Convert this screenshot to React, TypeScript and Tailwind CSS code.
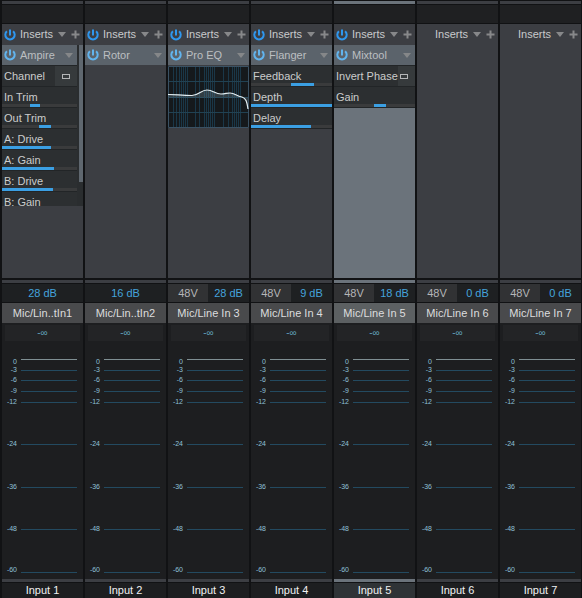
import React from "react";

type Param = {
  name: string;
  from?: number;
  to?: number;
  toggle?: boolean;
};

type Device = {
  name: string;
  params?: Param[];
  eq?: boolean;
  scroll?: boolean;
};

type Channel = {
  label: string;
  source: string;
  gain: string;
  phantom?: boolean;
  selected?: boolean;
  device?: Device;
};

const channels: Channel[] = [
  {
    label: "Input 1",
    source: "Mic/Lin..tIn1",
    gain: "28 dB",
    device: {
      name: "Ampire",
      scroll: true,
      params: [
        { name: "Channel", toggle: true },
        { name: "In Trim", from: 37, to: 51 },
        { name: "Out Trim", from: 49, to: 65 },
        { name: "A: Drive", from: 0, to: 65 },
        { name: "A: Gain", from: 0, to: 69 },
        { name: "B: Drive", from: 0, to: 68 },
        { name: "B: Gain", from: 0, to: 60 },
      ],
    },
  },
  { label: "Input 2", source: "Mic/Lin..tIn2", gain: "16 dB", device: { name: "Rotor" } },
  {
    label: "Input 3",
    source: "Mic/Line In 3",
    gain: "28 dB",
    phantom: true,
    device: { name: "Pro EQ", eq: true },
  },
  {
    label: "Input 4",
    source: "Mic/Line In 4",
    gain: "9 dB",
    phantom: true,
    device: {
      name: "Flanger",
      params: [
        { name: "Feedback", from: 49, to: 78 },
        { name: "Depth", from: 0, to: 100 },
        { name: "Delay", from: 0, to: 74 },
      ],
    },
  },
  {
    label: "Input 5",
    source: "Mic/Line In 5",
    gain: "18 dB",
    phantom: true,
    selected: true,
    device: {
      name: "Mixtool",
      params: [
        { name: "Invert Phase", toggle: true },
        { name: "Gain", from: 49, to: 64 },
      ],
    },
  },
  { label: "Input 6", source: "Mic/Line In 6", gain: "0 dB", phantom: true },
  { label: "Input 7", source: "Mic/Line In 7", gain: "0 dB", phantom: true },
];

const ticks = [
  { db: "0", row: "", label: "pt-1.5" },
  { db: "-3", row: "mt-px", label: "" },
  { db: "-6", row: "", label: "" },
  { db: "-9", row: "mt-px", label: "" },
  { db: "-12", row: "mt-px", label: "" },
  { db: "-24", row: "mt-8", label: "" },
  { db: "-36", row: "mt-[33px]", label: "" },
  { db: "-48", row: "mt-8", label: "" },
  { db: "-60", row: "mt-[33px]", label: "pb-1" },
];

function PowerIcon() {
  return (
    <svg viewBox="0 0 12 12" className="size-3" fill="none" stroke="currentColor" strokeWidth="2">
      <path d="M2.9 2.2A4.7 4.7 0 1 0 9.1 2.2" />
      <path d="M6 0.6V6.4" />
    </svg>
  );
}

function CaretIcon() {
  return (
    <svg viewBox="0 0 8 5" className="h-[5px] w-2" fill="currentColor">
      <path d="M0 0H8L4 5Z" />
    </svg>
  );
}

function PlusIcon() {
  return (
    <svg viewBox="0 0 9 9" className="size-[9px]" fill="currentColor">
      <path d="M3.5 0.5H5.5V3.5H8.5V5.5H5.5V8.5H3.5V5.5H0.5V3.5H3.5Z" />
    </svg>
  );
}

function EqCurve() {
  const grid = [5, 8, 11, 13, 15, 17, 19, 27, 31, 36, 38, 40, 42, 44, 46, 55, 60, 64, 66, 68, 70, 72];
  return (
    <svg
      viewBox="0 0 81 62"
      preserveAspectRatio="none"
      className="mt-px block h-[62px] w-full bg-[#15191c]"
      fill="none"
    >
      {grid.map((x) => (
        <path key={x} d={`M${x + 0.5} 0V62`} stroke="#1a3748" />
      ))}
      <path d="M0 15.5H81M0 31.5H81M0 46.5H81" stroke="#214253" />
      <path d="M0.5 0.5H80.5V61.5H0.5Z" stroke="#3a5163" />
      <path
        d="M0 28.5C8 28.5 14 29.5 24 29.5C31 29.5 33 24 39 24C45 24 47 28 53 28C58 28 58 27 62 27C67 27 68 30 74 31C78 32 79 36 80 43V31.5H0Z"
        fill="#7e9ba8"
        fillOpacity="0.28"
      />
      <path
        d="M0 28.5C8 28.5 14 29.5 24 29.5C31 29.5 33 24 39 24C45 24 47 28 53 28C58 28 58 27 62 27C67 27 68 30 74 31C78 32 79 36 80 43"
        stroke="#e3eef2"
        strokeWidth="1.2"
      />
    </svg>
  );
}

function ParamRow({ param, owner }: { param: Param; owner: string }) {
  if (param.toggle) {
    return (
      <label className="flex h-[21px] shrink-0 items-stretch border-b border-[#222527] bg-[#2c2f31]">
        <span className="shrink-0 grow pl-0.5 leading-5 whitespace-nowrap">{param.name}</span>
        <span className="flex w-[22px] min-w-0 items-center justify-end bg-[#363a3c] pr-[7px]">
          <input
            type="checkbox"
            className="h-[5px] w-2 shrink-0 appearance-none border border-[#b4b6b7] checked:bg-[#3b9fe3]"
          />
        </span>
      </label>
    );
  }
  const from = param.from ?? 0;
  const to = param.to ?? 0;
  return (
    <button
      type="button"
      aria-label={`${owner} ${param.name}`}
      className="flex h-[21px] shrink-0 flex-col border-b border-[#222527] bg-[#2c2f31] text-left"
    >
      <span className="h-[17px] pl-0.5 leading-5 whitespace-nowrap">{param.name}</span>
      <span className="flex h-[3px] w-full bg-[#3a3b3c]">
        <span
          className="h-full bg-[#3b9fe3]"
          style={{ marginLeft: `${from}%`, width: `${to - from}%` }}
        />
      </span>
    </button>
  );
}

function DeviceSlot({ device }: { device: Device }) {
  return (
    <div className={device.scroll ? "flex h-[161px] overflow-hidden" : "flex"}>
      <div className="flex min-w-0 grow flex-col">
        <div className="flex h-5 shrink-0 items-center bg-[#5b636b] pr-1">
          <button type="button" aria-label={`Bypass ${device.name}`} className="ml-0.5 text-[#62b4ee]">
            <PowerIcon />
          </button>
          <span className="ml-1 grow text-[#bcbfc1]">{device.name}</span>
          <button type="button" aria-label={`${device.name} presets`} className="text-[#858789]">
            <CaretIcon />
          </button>
        </div>
        {device.eq && <EqCurve />}
        {device.params && (
          <div className="flex flex-col border-t border-[#222527] text-[#cbcccc]">
            {device.params.map((p) => (
              <ParamRow key={p.name} param={p} owner={device.name} />
            ))}
          </div>
        )}
      </div>
      {device.scroll && (
        <div className="w-1.5 shrink-0 bg-[#2a2d2f] pl-0.5">
          <div className="h-[137px] bg-[#5f676f]" />
        </div>
      )}
    </div>
  );
}

function InsertRack({ channel }: { channel: Channel }) {
  const { device, selected } = channel;
  return (
    <section className={`h-[254px] ${selected ? "bg-[#6b737b]" : "bg-[#3c3e43]"}`}>
      <div className="flex h-[21px] items-center bg-[#3c3e43] pr-[3px]">
        {device && (
          <button type="button" aria-label="Bypass inserts" className="ml-0.5 text-[#2f97ee]">
            <PowerIcon />
          </button>
        )}
        <span className="grow pr-[5px] text-right text-[#c9cacc]">Inserts</span>
        <button type="button" aria-label="Inserts menu" className="text-[#87888a]">
          <CaretIcon />
        </button>
        <button type="button" aria-label="Add insert" className="ml-[5px] text-[#87888a]">
          <PlusIcon />
        </button>
      </div>
      {device && <DeviceSlot device={device} />}
    </section>
  );
}

function Meter() {
  return (
    <div className="h-64 bg-[#1d1e20] px-[3px] pt-0.5">
      <output className="block h-4 bg-[#232426] text-center text-[10px] leading-4 text-[#5f9db5]">
        -∞
      </output>
      <div className="mt-[13px] pr-[3px]">
        {ticks.map((t) => (
          <div key={t.db} className={`flex h-2.5 items-center ${t.row}`}>
            <span className={`w-3 shrink-0 text-[7px] leading-[10px] text-[#8fc0d8] ${t.label}`}>
              <span className="flex justify-end">{t.db}</span>
            </span>
            <span className={`ml-1 h-px grow ${t.db === "0" ? "bg-[#7f8f93]" : "bg-[#234a60]"}`} />
          </div>
        ))}
      </div>
    </div>
  );
}

function ChannelStrip({ channel }: { channel: Channel }) {
  const { selected } = channel;
  const stripe = selected ? "bg-[#6b737b]" : "bg-[#3c3e43]";
  return (
    <article className="min-w-0 flex-1 overflow-hidden">
      <div className={`mt-px h-[3px] ${stripe}`} />
      <div className="mt-px h-[18px] bg-[#1f2022]" />
      <div className="mt-px">
        <InsertRack channel={channel} />
      </div>
      <div className={`mt-0.5 h-[3px] ${stripe}`} />
      <div className="mt-px flex h-[18px] bg-[#1e2022] leading-[18px]">
        {channel.phantom && (
          <button type="button" className="w-10 shrink-0 bg-[#313234] text-[#b5b6b8]">
            48V
          </button>
        )}
        <button type="button" className="grow text-center text-[#45a4dc]">
          {channel.gain}
        </button>
      </div>
      <button
        type="button"
        className={`mt-px block h-5 w-full text-center leading-5 whitespace-nowrap text-[#dcddde] ${
          selected ? "bg-[#5c6062]" : "bg-[#494a4c]"
        }`}
      >
        {channel.source}
      </button>
      <Meter />
      <div className={`h-[3px] ${stripe}`} />
      <h2
        className={`mt-px h-[15px] text-center leading-[14px] text-[#f0f1f2] ${
          selected ? "bg-[#2f3336]" : "bg-[#1d1e20]"
        }`}
      >
        {channel.label}
      </h2>
    </article>
  );
}

export default function App() {
  return (
    <main className="flex gap-0.5 bg-[#111214] pr-px pl-0.5 font-['Liberation_Sans',Arial,sans-serif] text-[11px]">
      {channels.map((c) => (
        <ChannelStrip key={c.label} channel={c} />
      ))}
    </main>
  );
}
